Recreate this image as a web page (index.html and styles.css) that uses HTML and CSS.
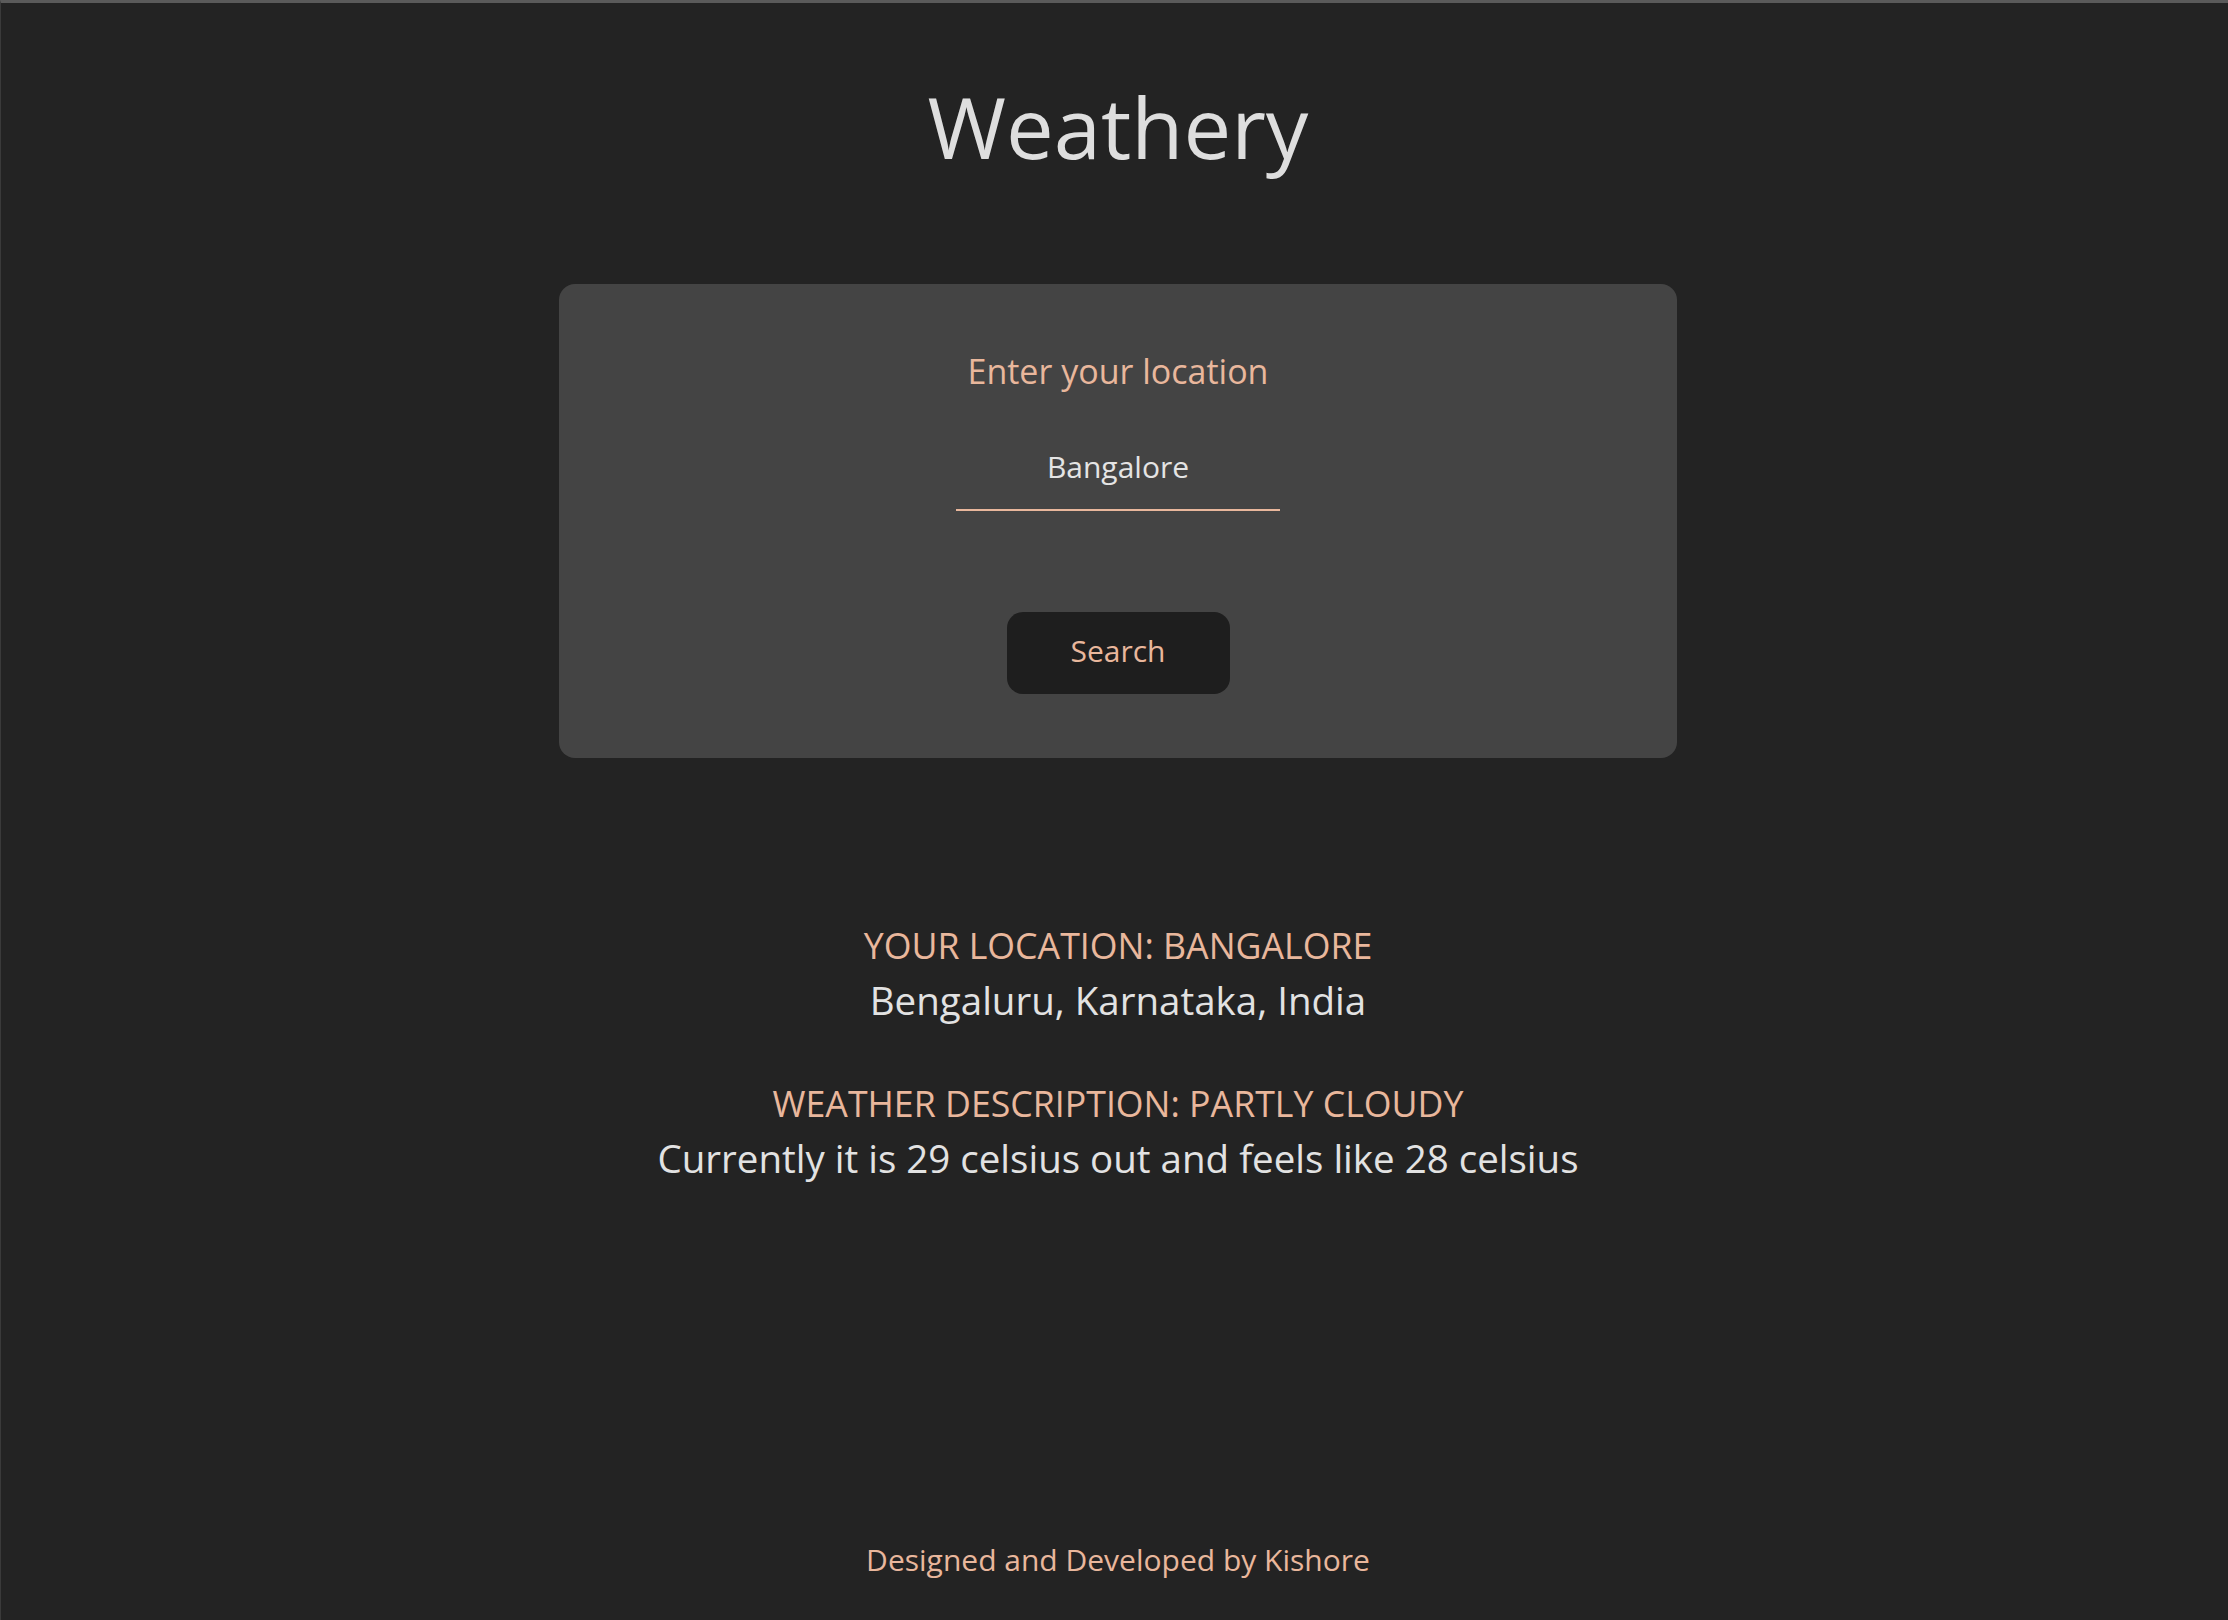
FILE: index.html
```html
<!DOCTYPE html>
<html lang="en">
<head>
<meta charset="utf-8">
<title>Weathery</title>
<link rel="stylesheet" href="styles.css">
</head>
<body>
  <h1 class="title">Weathery</h1>
  <form class="card">
    <label class="card-label" for="location">Enter your location</label>
    <input class="location-input" id="location" type="text" value="Bangalore">
    <button class="search-btn" type="button">Search</button>
  </form>
  <section class="results">
    <div class="result-group">
      <p class="result-heading">YOUR LOCATION: BANGALORE</p>
      <p class="result-text">Bengaluru, Karnataka, India</p>
    </div>
    <div class="result-group">
      <p class="result-heading">WEATHER DESCRIPTION: PARTLY CLOUDY</p>
      <p class="result-text">Currently it is 29 celsius out and feels like 28 celsius</p>
    </div>
  </section>
  <footer class="footer">Designed and Developed by Kishore</footer>
</body>
</html>
```
FILE: styles.css
```css
html, body {
  margin: 0;
  padding: 0;
}
body {
  height: 100vh;
  box-sizing: border-box;
  background: #232323;
  border-top: 3px solid #5a5a5a;
  border-left: 1px solid #3a3a3a;
  padding-left: 7px;
  display: flex;
  flex-direction: column;
  align-items: center;
  font-family: "Open Sans", "Liberation Sans", sans-serif;
  color: #e2e2e2;
}
.title {
  margin: 73px 0 0;
  font-size: 85px;
  line-height: 100px;
  font-weight: 400;
  color: #dedede;
}
.card {
  margin-top: 108px;
  width: 1118px;
  box-sizing: border-box;
  background: #444444;
  border-radius: 16px;
  padding: 67px 0 64px;
  display: flex;
  flex-direction: column;
  align-items: center;
}
.card-label {
  font-size: 34px;
  line-height: 40px;
  color: #e9b79c;
}
.location-input {
  margin-top: 33px;
  width: 324px;
  height: 87px;
  box-sizing: border-box;
  padding: 0;
  border: none;
  border-bottom: 2px solid #e9b79c;
  background: transparent;
  font-family: inherit;
  font-size: 30px;
  color: #e4e4e4;
  text-align: center;
  outline: none;
}
.search-btn {
  margin-top: 101px;
  width: 223px;
  height: 82px;
  border: none;
  border-radius: 16px;
  background: #1e1e1e;
  color: #e9b79c;
  font-family: inherit;
  font-size: 30px;
  padding: 0 0 5px;
}
.results {
  margin-top: 160px;
  display: flex;
  flex-direction: column;
  align-items: center;
  gap: 49px;
}
.result-group {
  display: flex;
  flex-direction: column;
  align-items: center;
}
.result-heading,
.result-text {
  margin: 0;
  line-height: 54.5px;
}
.result-heading {
  font-size: 35.7px;
  color: #e9b79c;
}
.result-text {
  font-size: 38.5px;
  color: #e2e2e2;
}
.footer {
  margin-top: auto;
  padding-bottom: 40px;
  font-size: 30px;
  line-height: 40px;
  color: #e9b79c;
}
```
